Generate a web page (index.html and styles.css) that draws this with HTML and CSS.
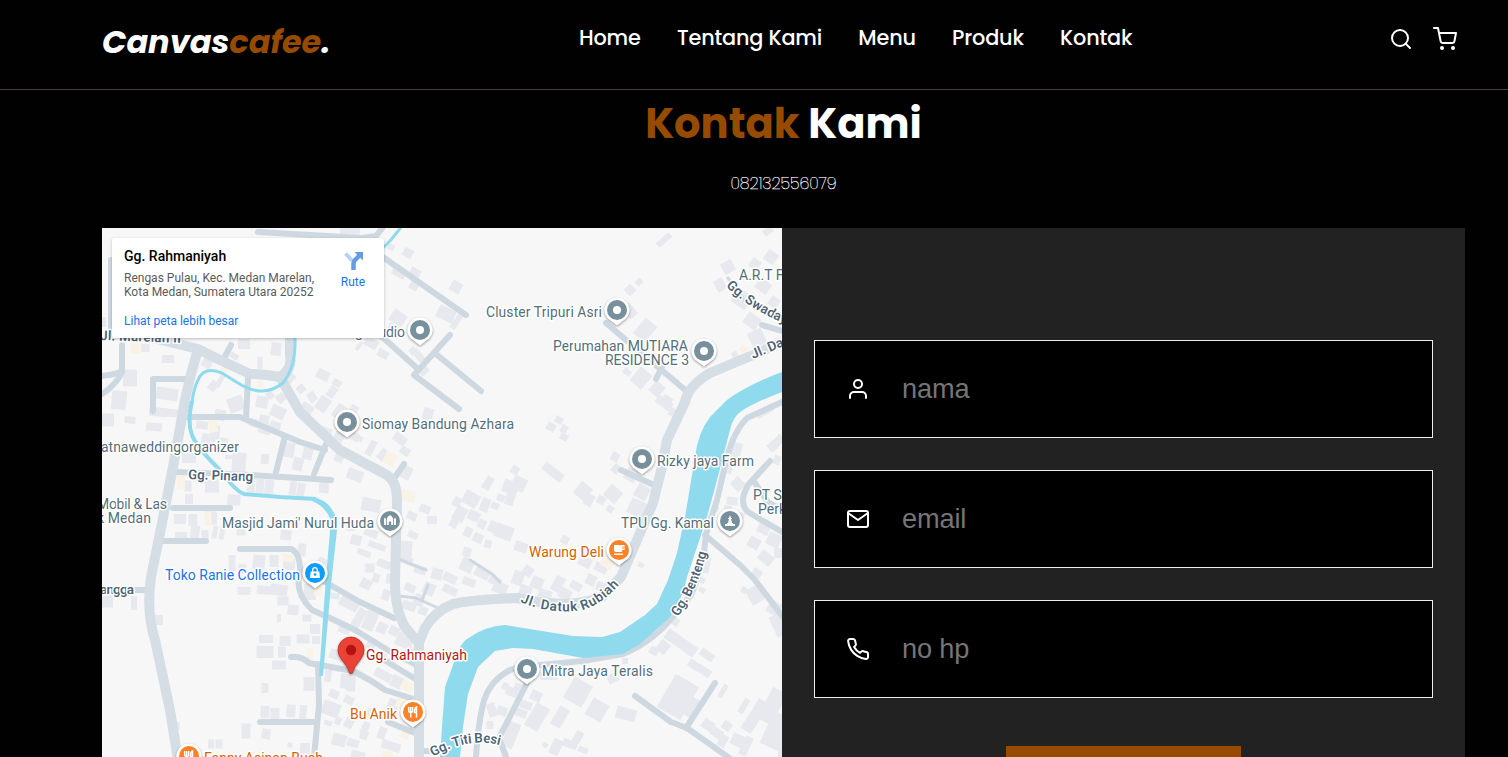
FILE: index.html
```html
<!DOCTYPE html>
<html lang="id">
<head>
<meta charset="utf-8">
<title>Canvascafee</title>
<link rel="stylesheet" href="styles.css">
</head>
<body>
<nav class="navbar">
  <a class="logo" href="#">Canvas<span>cafee</span>.</a>
  <div class="links">
    <a href="#">Home</a><a href="#">Tentang Kami</a><a href="#">Menu</a><a href="#">Produk</a><a href="#">Kontak</a>
  </div>
  <div class="extra">
    <svg class="icon" viewBox="0 0 24 24"><circle cx="11" cy="11" r="8"/><path d="M21 21l-4.35-4.35"/></svg>
    <svg class="icon" viewBox="0 0 24 24"><circle cx="9" cy="21" r="1"/><circle cx="20" cy="21" r="1"/><path d="M1 1h4l2.68 13.39a2 2 0 0 0 2 1.61h9.72a2 2 0 0 0 2-1.61L23 6H6"/></svg>
  </div>
</nav>
<section class="contact">
  <h2><span>Kontak</span> Kami</h2>
  <p class="phone">082132556079</p>
  <div class="row">
    <div class="map">
      <svg class="canvas" viewBox="102 228 680 529">
        <defs>
          <g id="pin"><path class="ring" d="M0-12.5a12.5 12.5 0 0 1 9.2 21L0 15.5-9.2 8.5A12.5 12.5 0 0 1 0-12.5z"/><circle r="10"/></g>
          <g id="dot"><use href="#pin"/><circle r="4" fill="#fff"/></g>
          <g id="food"><use href="#pin"/><path d="M-4.300-5v3.500a2 2 0 0 0 4 0V-5M-2.300-5V5.500M3.500 5.500V-5c-2 1-2 3-2 5.500h2" fill="none" stroke="#fff" stroke-width="1.500"/></g>
          <path id="datuk" d="M520 602Q552 615 583 610Q606 603 626 576"/>
          <path id="swaday" d="M726 286Q748 309 790 326"/>
          <path id="titi" d="M433 757Q455 744 475 743Q488 741 506 747"/>
          <path id="benteng" d="M678 617Q700 585 708 546"/>
        </defs>
        <g id="buildings"></g>
        <g class="lane">
          <path d="M380 255L420 283L466 315M450 335L414 375L459 409M436 354L481 391M380 335L418 369"/>
          <path d="M258 232L362 238L376 236L384 226M111 260V330M122 345L122 370Q119 374 102 376M122 372Q116 385 102 394M183 417H240L300 442L325 450M246 418L248 378M153 379V411M153 379H184M285 436L276 472M326 444L314 474M176 472L250 475L331 480M173 508H230M164 541H206M240 549H291Q301 553 300 575"/>
          <path d="M299 578Q296 594 312 610L330 618L355 630L391 652L415 664M325 582L360 602L394 618M291 657Q302 656 309 663L353 671Q371 680 385 690L417 700M318 664L319 705L314 757M260 722H316M135 590H149M388 722L415 733M417 751H434M231 345L222 362M376 655L417 680"/>
          <path d="M606 323L690 394M663 365L656 379M762 325L782 331M621 470L656 486M770 461L748 485Q738 503 748 512L782 532M755 483L768 502L782 510M705 535L740 565L755 580L782 616M635 696L671 722L687 728L735 762M715 683L686 728M527 683L499 738L508 762M395 477L404 464M782 402L747 418Q734 431 727 457L717 500L706 534Q704 567 691 595L670 620Q650 643 623 654L583 661L540 665Q520 666 510 670Q489 681 483 704Q478 725 476 757"/>
          <path stroke-width="3" d="M396 558L426 570M400 596L416 598L438 608M422 600L428 585M470 560L492 574L500 582M728 278L745 301"/>
        </g>
        <g class="road">
          <path d="M290 330V355Q293 369 280 377Q265 374 250 374L220 360L198 349L145 336"/>
          <path d="M198 349L190 378L185 400L173 467L160 533L151 577Q146 612 155 640L170 710L178 760"/>
          <path d="M280 377L300 412L340 450L385 474Q397 480 397 500L395 580Q395 610 405 627L419 643V757M419 643L425 628Q435 611 453 604Q471 600 517 598Q570 610 602 597L621 577L637 540L653 503L662 467L667 440L685 402Q688 386 710 373L753 355L785 341"/>
        </g>
        <g class="water">
          <path class="stream thin" d="M402 226Q392 240 380 251M295 338Q296 367 283 383Q263 399 238 383L222 373Q205 366 199 378Q193 389 192 404"/>
          <path class="stream" d="M192 401Q187 422 192 435Q196 447 223 473Q234 490 244 494L280 497L316 499"/>
          <path d="M312 497Q325 499 331 508L337 518V530L331 585L323 676H319L326 577L331 520Q326 507 312 501z"/>
          <path d="M782 372Q747 385 727 400L710 417Q698 433 695 457L685 517L677 553L668 580L657 604L645 615L620 632L602 637L573 636L505 625Q485 626 467 639Q461 643 457 654L445 687L442 727L440 757H460L463 727L468 694L478 667L495 651L513 648L533 649L583 658L623 654L640 644L667 620Q681 605 687 577L707 517L717 480L730 430Q733 416 743 410Q756 402 782 392z"/>
        </g>
        <g class="names">
          <text x="100" y="340" class="street" textLength="81" transform="rotate(2 100 340)">Jl. Marelan II</text>
          <text x="188" y="479" class="street" textLength="65" transform="rotate(2 188 479)">Gg. Pinang</text>
          <text x="100" y="594" class="street" textLength="34">angga</text>
          <text class="street"><textPath href="#datuk" textLength="109">Jl. Datuk Rubiah</textPath></text>
          <text class="street"><textPath href="#swaday">Gg. Swadaya</textPath></text>
          <text class="street"><textPath href="#titi" textLength="70">Gg. Titi Besi</textPath></text>
          <text class="street"><textPath href="#benteng" textLength="71">Gg. Benteng</textPath></text>
          <text x="753" y="359" class="street" transform="rotate(-23 753 359)">Jl. Datuk</text>
          <text x="355" y="337" textLength="50">g Studio</text>
          <text x="486" y="317" textLength="116">Cluster Tripuri Asri</text>
          <text x="553" y="351" textLength="135">Perumahan MUTIARA</text>
          <text x="605" y="365" textLength="84">RESIDENCE 3</text>
          <text x="739" y="280">A.R.T Foto</text>
          <text x="362" y="429" textLength="152">Siomay Bandung Azhara</text>
          <text x="101" y="452" textLength="138">atnaweddingorganizer</text>
          <text x="97" y="509" textLength="70">Mobil &amp; Las</text>
          <text x="97" y="523" textLength="54">k Medan</text>
          <text x="222" y="528" textLength="152">Masjid Jami' Nurul Huda</text>
          <text x="657" y="466" textLength="97">Rizky jaya Farm</text>
          <text x="621" y="528" textLength="93">TPU Gg. Kamal</text>
          <text x="753" y="500">PT Sinar</text>
          <text x="758" y="514">Perkasa</text>
          <text x="542" y="676" textLength="111">Mitra Jaya Teralis</text>
          <text x="529" y="557" textLength="75" class="eat">Warung Deli</text>
          <text x="350" y="719" textLength="47" class="eat">Bu Anik</text>
          <text x="204" y="763" textLength="119" class="eat">Fanny Asinan Buah</text>
          <text x="165" y="580" textLength="135" class="shop">Toko Ranie Collection</text>
          <text x="366" y="660" textLength="101" class="here">Gg. Rahmaniyah</text>
        </g>
        <g class="pins">
          <use href="#dot" x="420" y="330"/><use href="#dot" x="617" y="310"/><use href="#dot" x="704" y="351"/>
          <use href="#dot" x="347" y="422"/><use href="#dot" x="642" y="459"/><use href="#dot" x="527" y="669"/>
          <g transform="translate(390 521)"><use href="#pin"/><path fill="#fff" d="M-6 4v-6l1-1.500 1 1.500v6zM4 4v-6l1-1.500 1 1.500v6zM-3.200 4v-6q0-2 3.200-4 3.200 2 3.200 4v6H1.200V1q-1.200-1.500-2.400 0v3z"/></g>
          <g transform="translate(730 521)"><use href="#pin"/><path fill="#fff" d="M-5 5V3h2V2h1l1-4h-1v-1h1l1-3 1 3h1v1h-1l1 4h1v1h2v2z"/></g>
          <g transform="translate(619 550)" fill="#ff8126"><use href="#pin"/><path fill="#fff" d="M-5-5h10.500v5H3.500q0 2-2 2h-4.500q-2 0-2-2zM-5 3.500H4V5h-9z"/><path fill="#ff8126" d="M3.500-3.800h1V-1h-1z"/></g>
          <g fill="#ff8126"><use href="#food" x="413" y="712"/><use href="#food" x="189" y="756"/></g>
          <g transform="translate(315 573)" fill="#0e9cff"><use href="#pin"/><path fill="#fff" d="M-4.300-1.500H4.300L5 5H-5z"/><path d="M-2.300-1v-2a2.300 2.300 0 0 1 4.600 0v2" fill="none" stroke="#fff" stroke-width="1.300"/><circle cy="1.500" r="1.300"/></g>
          <path d="M351 637a13 13 0 0 1 13 13q0 5-4 10-6 7-8 13.500h-2q-2-6.500-8-13.500-4-5-4-10a13 13 0 0 1 13-13z" fill="#ea4335" stroke="#c5221f" stroke-width=".7"/><circle cx="351" cy="650" r="5.200" fill="#b31412"/>
        </g>
      </svg>
      <div class="card">
        <div class="place">
          <strong>Gg. Rahmaniyah</strong>
          <p>Rengas Pulau, Kec. Medan Marelan,<br>Kota Medan, Sumatera Utara 20252</p>
          <a href="#">Lihat peta lebih besar</a>
        </div>
        <a class="route" href="#">
          <svg viewBox="0 0 22 22"><path d="M3.500 4.500L10 11.500" stroke="#b5d2f8" stroke-width="4"/><path d="M11.500 21V14.500Q11.500 12.500 13 11L17.500 6.500" fill="none" stroke="#639ce6" stroke-width="4.500"/><path d="M12.500 3H21v8.500z" fill="#639ce6"/></svg>
          Rute
        </a>
      </div>
    </div>
    <form class="form">
      <label class="field"><svg class="icon" viewBox="0 0 24 24"><path d="M20 21v-2a4 4 0 0 0-4-4H8a4 4 0 0 0-4 4v2"/><circle cx="12" cy="7" r="4"/></svg><input type="text" placeholder="nama"></label>
      <label class="field"><svg class="icon" viewBox="0 0 24 24"><path d="M4 4h16c1.100 0 2 .9 2 2v12c0 1.100-.9 2-2 2H4c-1.100 0-2-.9-2-2V6c0-1.100.9-2 2-2z"/><path d="M22 6l-10 7L2 6"/></svg><input type="text" placeholder="email"></label>
      <label class="field"><svg class="icon" viewBox="0 0 24 24"><path d="M22 16.920v3a2 2 0 0 1-2.180 2 19.790 19.790 0 0 1-8.630-3.070 19.500 19.500 0 0 1-6-6 19.790 19.790 0 0 1-3.070-8.670A2 2 0 0 1 4.110 2h3a2 2 0 0 1 2 1.720 12.840 12.840 0 0 0 .7 2.810 2 2 0 0 1-.45 2.110L8.090 9.910a16 16 0 0 0 6 6l1.270-1.270a2 2 0 0 1 2.110-.45 12.840 12.840 0 0 0 2.810.7A2 2 0 0 1 22 16.920z"/></svg><input type="text" placeholder="no hp"></label>
      <button class="send" type="button" aria-label="Kirim"></button>
    </form>
  </div>
</section>
<script src="map.js"></script>
</body>
</html>
```
FILE: map.js
```js
// Buildings: centre x, centre y, width, height, rotation in degrees
const houses = [
[664,240,17,6,-40],[456,287,11,11,30],[630,290,9,9,45],[639,282,6,7,45],[728,267,12,12,-30],[720,285,10,12,-30],[755,264,10,10,35],[771,257,12,12,35],[768,231,10,7,-35],
[742,299,17,16,35],[763,286,14,12,35],[752,321,15,13,35],[757,338,15,16,-25],[774,302,10,10,35],[630,311,10,14,-40],[645,330,15,20,40],[627,372,8,6,40],[641,378,15,18,40],[657,389,12,13,40],[667,400,10,8,35],[735,355,7,6,60],
[446,314,18,13,25],[457,321,6,18,35],[408,253,10,9,30],[391,247,7,6,30],[415,273,11,9,30],[399,273,14,8,30],[414,286,9,8,30],[398,318,15,13,35],[419,356,15,7,50],[413,351,7,7,50],[424,371,10,7,-45],[383,354,11,8,30],[359,346,10,4,-55],[371,343,14,9,30],[393,328,10,8,35],[350,231,20,7,0],[428,414,10,12,15],
[145,348,9,8,0],[168,359,12,8,0],[130,378,14,17,0],[103,322,6,10,0],[119,400,15,19,5],[108,420,12,13,0],[167,394,22,12,8],[158,412,18,9,5],[207,363,10,10,30],[213,386,8,10,40],[220,381,5,13,30],[234,356,9,6,30],[244,344,12,10,0],[260,363,5,12,0],[276,349,10,13,5],[270,395,8,7,50],[290,379,7,12,40],[281,398,9,9,-40],[301,389,8,8,-40],[312,397,8,10,-35],[262,402,12,12,10],[236,404,16,15,-20],[220,415,11,11,10],[264,421,10,12,10],[278,412,15,12,25],[305,411,13,16,35],[323,404,12,15,35],[340,412,12,15,35],[332,392,8,12,35],[323,375,13,10,25],[337,383,9,7,30],[353,411,8,12,30],
[130,420,11,7,5],[154,427,16,8,4],[171,413,18,8,4],[202,425,12,8,8],[215,432,10,14,5],[208,442,14,16,8],[239,462,14,19,5],[254,423,10,8,15],[265,429,12,10,20],[275,426,11,9,18],[265,459,8,10,5],[224,442,8,8,10],[229,457,8,4,0],[189,458,14,10,0],[289,450,11,15,10],[298,464,10,13,14],[308,452,10,15,13],[326,432,11,9,20],[339,437,10,11,32],[371,448,7,16,28],[358,438,10,5,22],[383,455,9,12,40],[400,439,14,9,37],[405,451,10,8,35],[405,472,13,13,25],[355,475,16,11,20],[340,456,9,13,25],[371,505,19,13,12],[355,437,9,8,25],[212,486,14,13,0],[188,486,7,11,0],[189,499,8,10,0],[234,500,13,11,3],[251,485,8,14,4],[260,486,8,14,5],[269,487,9,14,6],[293,488,7,14,10],[301,490,8,14,10],[324,487,10,12,5],[171,481,8,9,0],[180,519,12,10,0],[193,520,9,12,0],[211,518,12,13,0],[181,537,12,10,0],[195,532,9,13,6],[205,535,7,10,0],[215,532,5,13,10],[222,533,5,13,10],[241,531,9,9,0],[286,535,11,10,5],[232,563,7,16,0],[242,569,8,10,10],[259,562,12,14,5],[274,561,9,12,0],[289,564,12,12,5],[302,550,8,13,5],[318,571,12,14,15],[322,562,9,8,30],
[351,527,9,8,0],[356,540,11,10,15],[364,553,14,6,20],[371,533,14,8,20],[377,546,18,6,20],[384,564,14,8,20],[370,568,9,9,0],[406,550,12,18,5],[412,516,10,8,25],[413,535,10,7,25],[406,560,14,8,20],[420,570,12,8,15],[432,520,10,8,0],[437,574,11,11,15],[425,509,11,8,20],
[107,601,12,13,0],[134,603,6,14,0],[159,620,8,10,0],[244,591,13,8,0],[264,590,14,9,5],[279,590,17,11,8],[283,601,11,9,0],[293,610,11,10,5],[279,618,4,8,0],[307,618,9,7,0],[310,592,12,16,0],[315,629,10,10,0],[266,639,14,8,0],[285,641,11,10,0],[303,639,13,9,0],[316,640,8,8,0],[265,652,17,12,0],[282,652,8,11,0],[279,665,14,9,0],[309,684,11,14,0],[265,688,7,10,0],[265,712,9,12,0],[275,714,9,12,0],[291,711,9,13,5],[303,713,7,16,5],[246,731,9,15,0],[266,734,9,10,10],[211,744,6,9,0],[219,744,7,9,0],[177,726,5,8,0],[305,750,10,14,0],[290,745,5,5,0],
[334,596,11,6,5],[349,604,20,10,28],[359,618,9,20,30],[370,621,12,19,24],[382,628,10,11,25],[394,631,10,9,28],[405,641,18,14,25],[412,654,13,10,20],[337,655,15,10,20],[344,630,12,7,20],[328,676,7,12,5],[344,681,7,15,4],[351,683,9,17,3],[334,694,10,8,25],[349,700,10,8,25],[331,709,18,14,20],[328,723,8,5,15],[338,721,6,8,25],[349,723,9,10,28],[365,728,7,13,25],[339,740,14,12,15],[353,743,12,8,15],[364,735,8,9,20],[382,733,8,12,20],[391,746,19,9,18],[372,714,12,8,28],[358,755,14,8,15],[383,675,18,9,28],[397,682,12,12,25],[393,705,11,12,25],[381,656,10,8,25],[371,645,9,9,25],
[366,584,11,10,28],[386,595,8,11,20],[410,588,11,8,25],[419,600,10,12,20],[409,606,14,9,20],[429,589,12,12,25],[423,611,9,8,20],[390,579,8,10,10],[376,578,7,9,20],
[615,457,8,9,30],[616,469,8,9,40],[631,475,12,12,30],[642,492,13,14,30],[553,472,23,9,38],[551,427,9,8,30],[564,429,7,8,30],[564,437,8,7,30],[559,420,8,7,30],[515,470,8,8,30],[488,483,8,14,30],[507,486,8,13,20],[519,484,14,14,25],[511,496,9,19,18],[471,499,16,14,30],[457,502,8,10,30],[485,505,9,14,20],[501,498,8,7,25],[495,506,8,7,25],[460,514,12,15,30],[455,521,8,14,30],[474,516,12,10,25],[482,524,8,9,25],[493,527,9,11,25],[504,532,18,14,20],[468,532,8,10,25],[478,538,10,9,25],[488,544,7,8,15],[521,547,13,10,18],[565,540,8,8,30],[583,491,14,15,40],[589,500,9,12,30],[601,500,8,8,30],[613,494,15,14,40],[610,509,7,7,35],[637,508,17,16,25],[640,519,9,13,25],[601,568,13,9,25],[585,562,13,10,25],[467,552,8,9,15],[467,565,13,14,25],[482,573,15,10,25],[450,578,14,9,25],[495,581,13,8,25],[469,582,13,8,20],[450,590,15,8,25],[500,588,15,11,20],[518,578,11,14,20],[528,571,10,10,35],[537,583,12,12,25],[558,584,10,16,30],[565,594,12,11,30],[576,586,12,8,30],[591,580,10,11,25],[545,594,14,9,20],[525,592,12,13,20],[602,587,12,9,20],
[664,403,17,9,35],[674,413,11,8,30],[641,565,6,5,20],[736,450,11,15,15],[728,468,9,11,15],[738,484,12,11,45],[732,501,11,8,5],[716,509,6,5,10],[728,508,8,5,5],[765,412,18,6,-30],[773,446,9,10,50],[779,440,8,10,40],[777,460,7,9,20],[741,517,6,9,20],[764,528,12,12,25],[774,540,14,13,25],[754,543,12,11,30],[779,553,10,10,0],[766,558,15,11,40],[707,565,6,17,10],[757,573,10,8,30],[755,595,14,17,-30],[744,590,6,6,30],[774,608,13,13,30],[779,625,13,22,-25],[702,590,7,5,30],[702,580,7,6,30],[676,622,6,8,35],
[654,651,9,8,30],[663,647,11,12,40],[681,643,35,11,35],[707,655,15,8,35],[694,665,12,8,35],[704,671,15,8,35],[678,697,27,38,30],[689,706,15,20,30],[723,691,5,14,30],[744,706,6,16,30],[755,716,12,35,33],[772,706,16,35,28],[776,731,20,35,25],[783,744,10,30,0],[708,725,12,10,35],[717,733,12,9,35],[727,726,9,9,35],[723,741,8,12,30],[739,741,16,12,25],[746,746,8,20,25],[578,692,21,24,30],[597,710,18,19,30],[626,714,20,12,15],[613,678,11,9,-25],[625,661,6,6,0],[537,717,15,26,30],[560,717,11,21,30],[578,737,8,12,30],[570,744,15,8,20],[556,747,10,16,25],[545,745,5,5,35],[583,750,10,6,20],[520,688,12,8,20],[536,696,11,10,25],[512,692,12,9,25],[526,705,12,8,20],[521,713,12,8,20],[511,735,12,26,22],[492,710,9,14,-20],[502,711,10,9,20],[490,725,7,8,0],[505,686,6,7,25],[549,676,18,8,0]
];
const cream = [[136,348,11,12,0],[213,426,9,13,-10],[225,368,7,8,25],[260,384,6,6,0],[390,459,12,12,25],[408,496,14,11,12],[181,483,8,14,0],[208,518,7,12,0],[288,558,11,8,5],[318,591,8,10,0],[310,654,6,11,0],[607,563,13,10,30],[744,349,8,7,30],[415,646,7,6,30],[407,686,12,10,25],[401,703,9,11,20],[405,735,9,7,25],[387,755,11,8,15]];
const layer = document.getElementById("buildings");
function plot(list, fill) {
  for (const [x, y, w, h, a] of list) {
    const r = document.createElementNS("http://www.w3.org/2000/svg", "rect");
    r.setAttribute("x", x - w / 2);
    r.setAttribute("y", y - h / 2);
    r.setAttribute("width", w);
    r.setAttribute("height", h);
    r.setAttribute("transform", `rotate(${a} ${x} ${y})`);
    r.setAttribute("fill", fill);
    layer.append(r);
  }
}
plot(houses, "#e8e9ee");
plot(cream, "#f8f3e6");
```
FILE: styles.css
```css
* { margin: 0; padding: 0; box-sizing: border-box; }
body { background: #010101; color: #fff; height: 757px; overflow: hidden; font-family: Poppins, Inter, sans-serif; }
a { color: inherit; text-decoration: none; }
.icon { width: 24px; height: 24px; fill: none; stroke: #fff; stroke-width: 2; stroke-linecap: round; stroke-linejoin: round; flex: none; }
.navbar { height: 90px; border-bottom: 1px solid #513d2a; display: grid; grid-template-columns: 477px 1fr 68px; padding: 0 51px 0 102px; }
.logo { font-size: 32px; font-weight: 700; font-style: italic; line-height: 48px; padding-top: 18px; white-space: nowrap; }
.logo span, h2 span { color: #964b00; }
.links { display: flex; gap: 36.3px; padding-top: 22px; font-size: 20.8px; font-weight: 500; line-height: 31px; letter-spacing: -0.18px; white-space: nowrap; }
.extra { display: flex; gap: 20px; padding-top: 27px; }
h2 { font-size: 41.6px; line-height: 62px; text-align: center; padding-top: 3px; margin-left: 59px; }
.phone { font-size: 16px; font-weight: 200; line-height: 26px; text-align: center; margin: 16px 0 31px 59px; -webkit-text-stroke: 0.25px #fff; }
.row { display: grid; grid-template-columns: 680px 683px; margin-left: 102px; height: 529px; }
.map { position: relative; background: #f7f7f7; overflow: hidden; font-family: Roboto, sans-serif; }
.canvas { display: block; width: 680px; height: 529px; }
.lane { fill: none; stroke: #ced8e1; stroke-width: 6; stroke-linecap: round; stroke-linejoin: round; }
.road { fill: none; stroke: #d5dee5; stroke-width: 10; stroke-linejoin: round; }
.water { fill: #90daee; }
.stream { fill: none; stroke: #90daee; stroke-width: 4; }
.thin { stroke-width: 3; }
.names { font-size: 14px; fill: #546e7a; stroke: #fff; stroke-width: 3px; paint-order: stroke; stroke-linejoin: round; }
.names .street { font-weight: 600; fill: #4e6376; font-size: 13.5px; }
.names .eat { fill: #d56100; }
.names .shop { fill: #1a73e8; }
.names .here { fill: #b31412; }
.pins { fill: #78909c; filter: drop-shadow(0 1px 1px rgba(0,0,0,.4)); }
.ring { fill: #fff; }
.card { position: absolute; left: 10px; top: 10px; width: 272px; height: 100px; background: #fff; border-radius: 2px; box-shadow: 0 1px 3px rgba(0,0,0,.25); display: flex; justify-content: space-between; padding: 10px 16px 0 12px; font-size: 12px; line-height: 14px; color: #5b5b5b; }
.place strong { display: block; font-size: 14px; font-weight: 500; line-height: 17px; color: #000; margin-bottom: 6px; }
.place a, .route { color: #1a73e8; }
.place a { display: block; margin-top: 15px; }
.route { display: flex; flex-direction: column; align-items: center; gap: 4px; width: 30px; padding-top: 1px; }
.route svg { width: 22px; height: 22px; }
.form { background: #222; padding: 112px 32px 0; display: flex; flex-direction: column; gap: 32px; overflow: hidden; }
.field { display: flex; align-items: center; flex: none; height: 98px; border: 1px solid #eee; background: #000; padding-left: 31px; }
.field input { flex: 1; background: none; border: 0; outline: 0; color: #fff; font: 27.2px "Liberation Sans", sans-serif; letter-spacing: -0.15px; padding: 0 16px 0 32px; }
.field input::placeholder { color: #757575; opacity: 1; }
.send { align-self: center; flex: none; width: 235px; height: 60px; margin-top: 16px; border: 0; background: #964b00; }
```
